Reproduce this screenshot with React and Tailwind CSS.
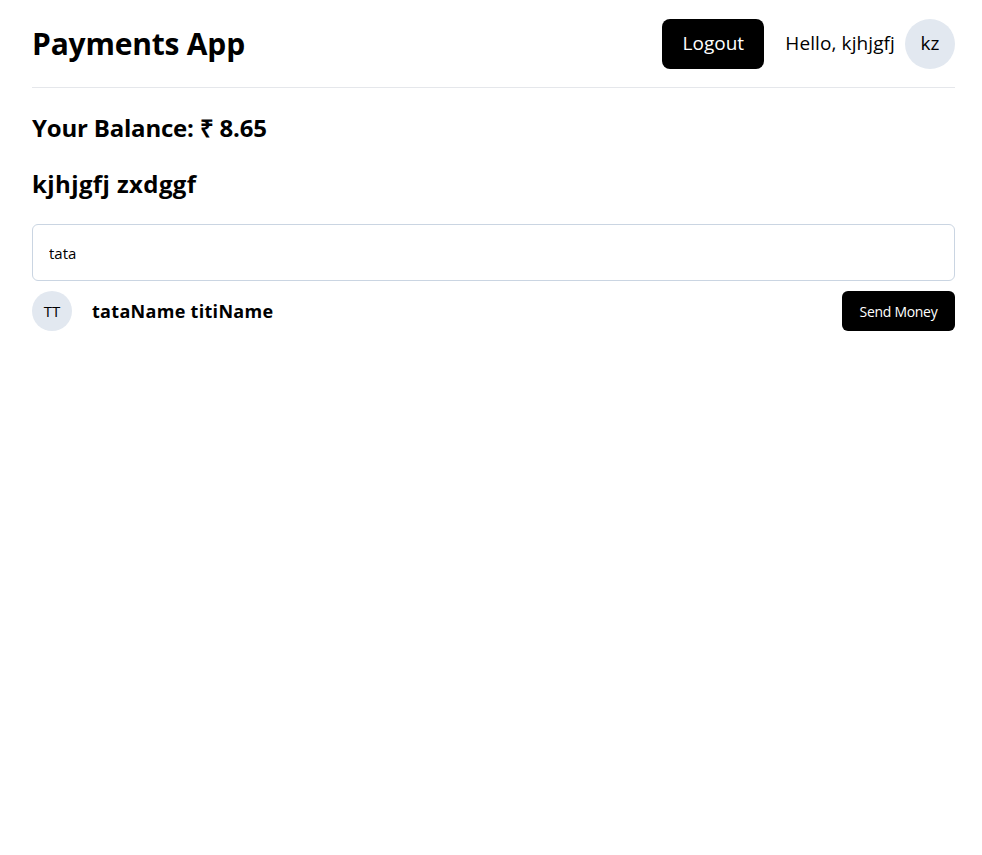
import React from 'react';

const users = [{ first: 'tataName', last: 'titiName' }];

const App = () => {
    return (
        <div className="min-h-screen bg-white text-black pl-8 pr-[27px] font-['Open_Sans',sans-serif]">
            <header className="flex items-center justify-between h-[88px] border-b border-gray-200">
                <h1 className="text-[30px] font-bold tracking-[-0.2px]">Payments App</h1>
                <div className="flex items-center">
                    <button className="bg-black text-white rounded-lg h-[50px] w-[102px] text-[19px] mr-[21px]">Logout</button>
                    <span className="text-[19px] tracking-[0.1px] mr-[10px]">Hello, kjhjgfj</span>
                    <div className="w-[50px] h-[50px] rounded-full bg-slate-200 flex items-center justify-center text-[19px]">kz</div>
                </div>
            </header>

            <div className="mt-[12px] text-[24px] font-bold tracking-[-0.2px] h-[56px] flex items-center">Your Balance: ₹ 8.65</div>
            <div className="text-[24px] font-bold tracking-[0.4px] h-[56px] flex items-center">kjhjgfj zxdggf</div>

            <input
                className="mt-[12px] w-full h-[57px] border border-slate-300 rounded-md px-4 text-[15px] outline-none"
                defaultValue="tata"
            />

            {users.map((u) => (
                <div key={u.first} className="flex items-center justify-between mt-[10px]">
                    <div className="flex items-center">
                        <div className="w-10 h-10 rounded-full bg-slate-200 flex items-center justify-center text-[15px]">TT</div>
                        <span className="ml-5 text-[18px] font-bold tracking-[0.3px]">{u.first} {u.last}</span>
                    </div>
                    <button className="bg-black text-white rounded-md h-10 w-[113px] text-[14px] tracking-[-0.3px]">Send Money</button>
                </div>
            ))}
        </div>
    );
};

export default App;
